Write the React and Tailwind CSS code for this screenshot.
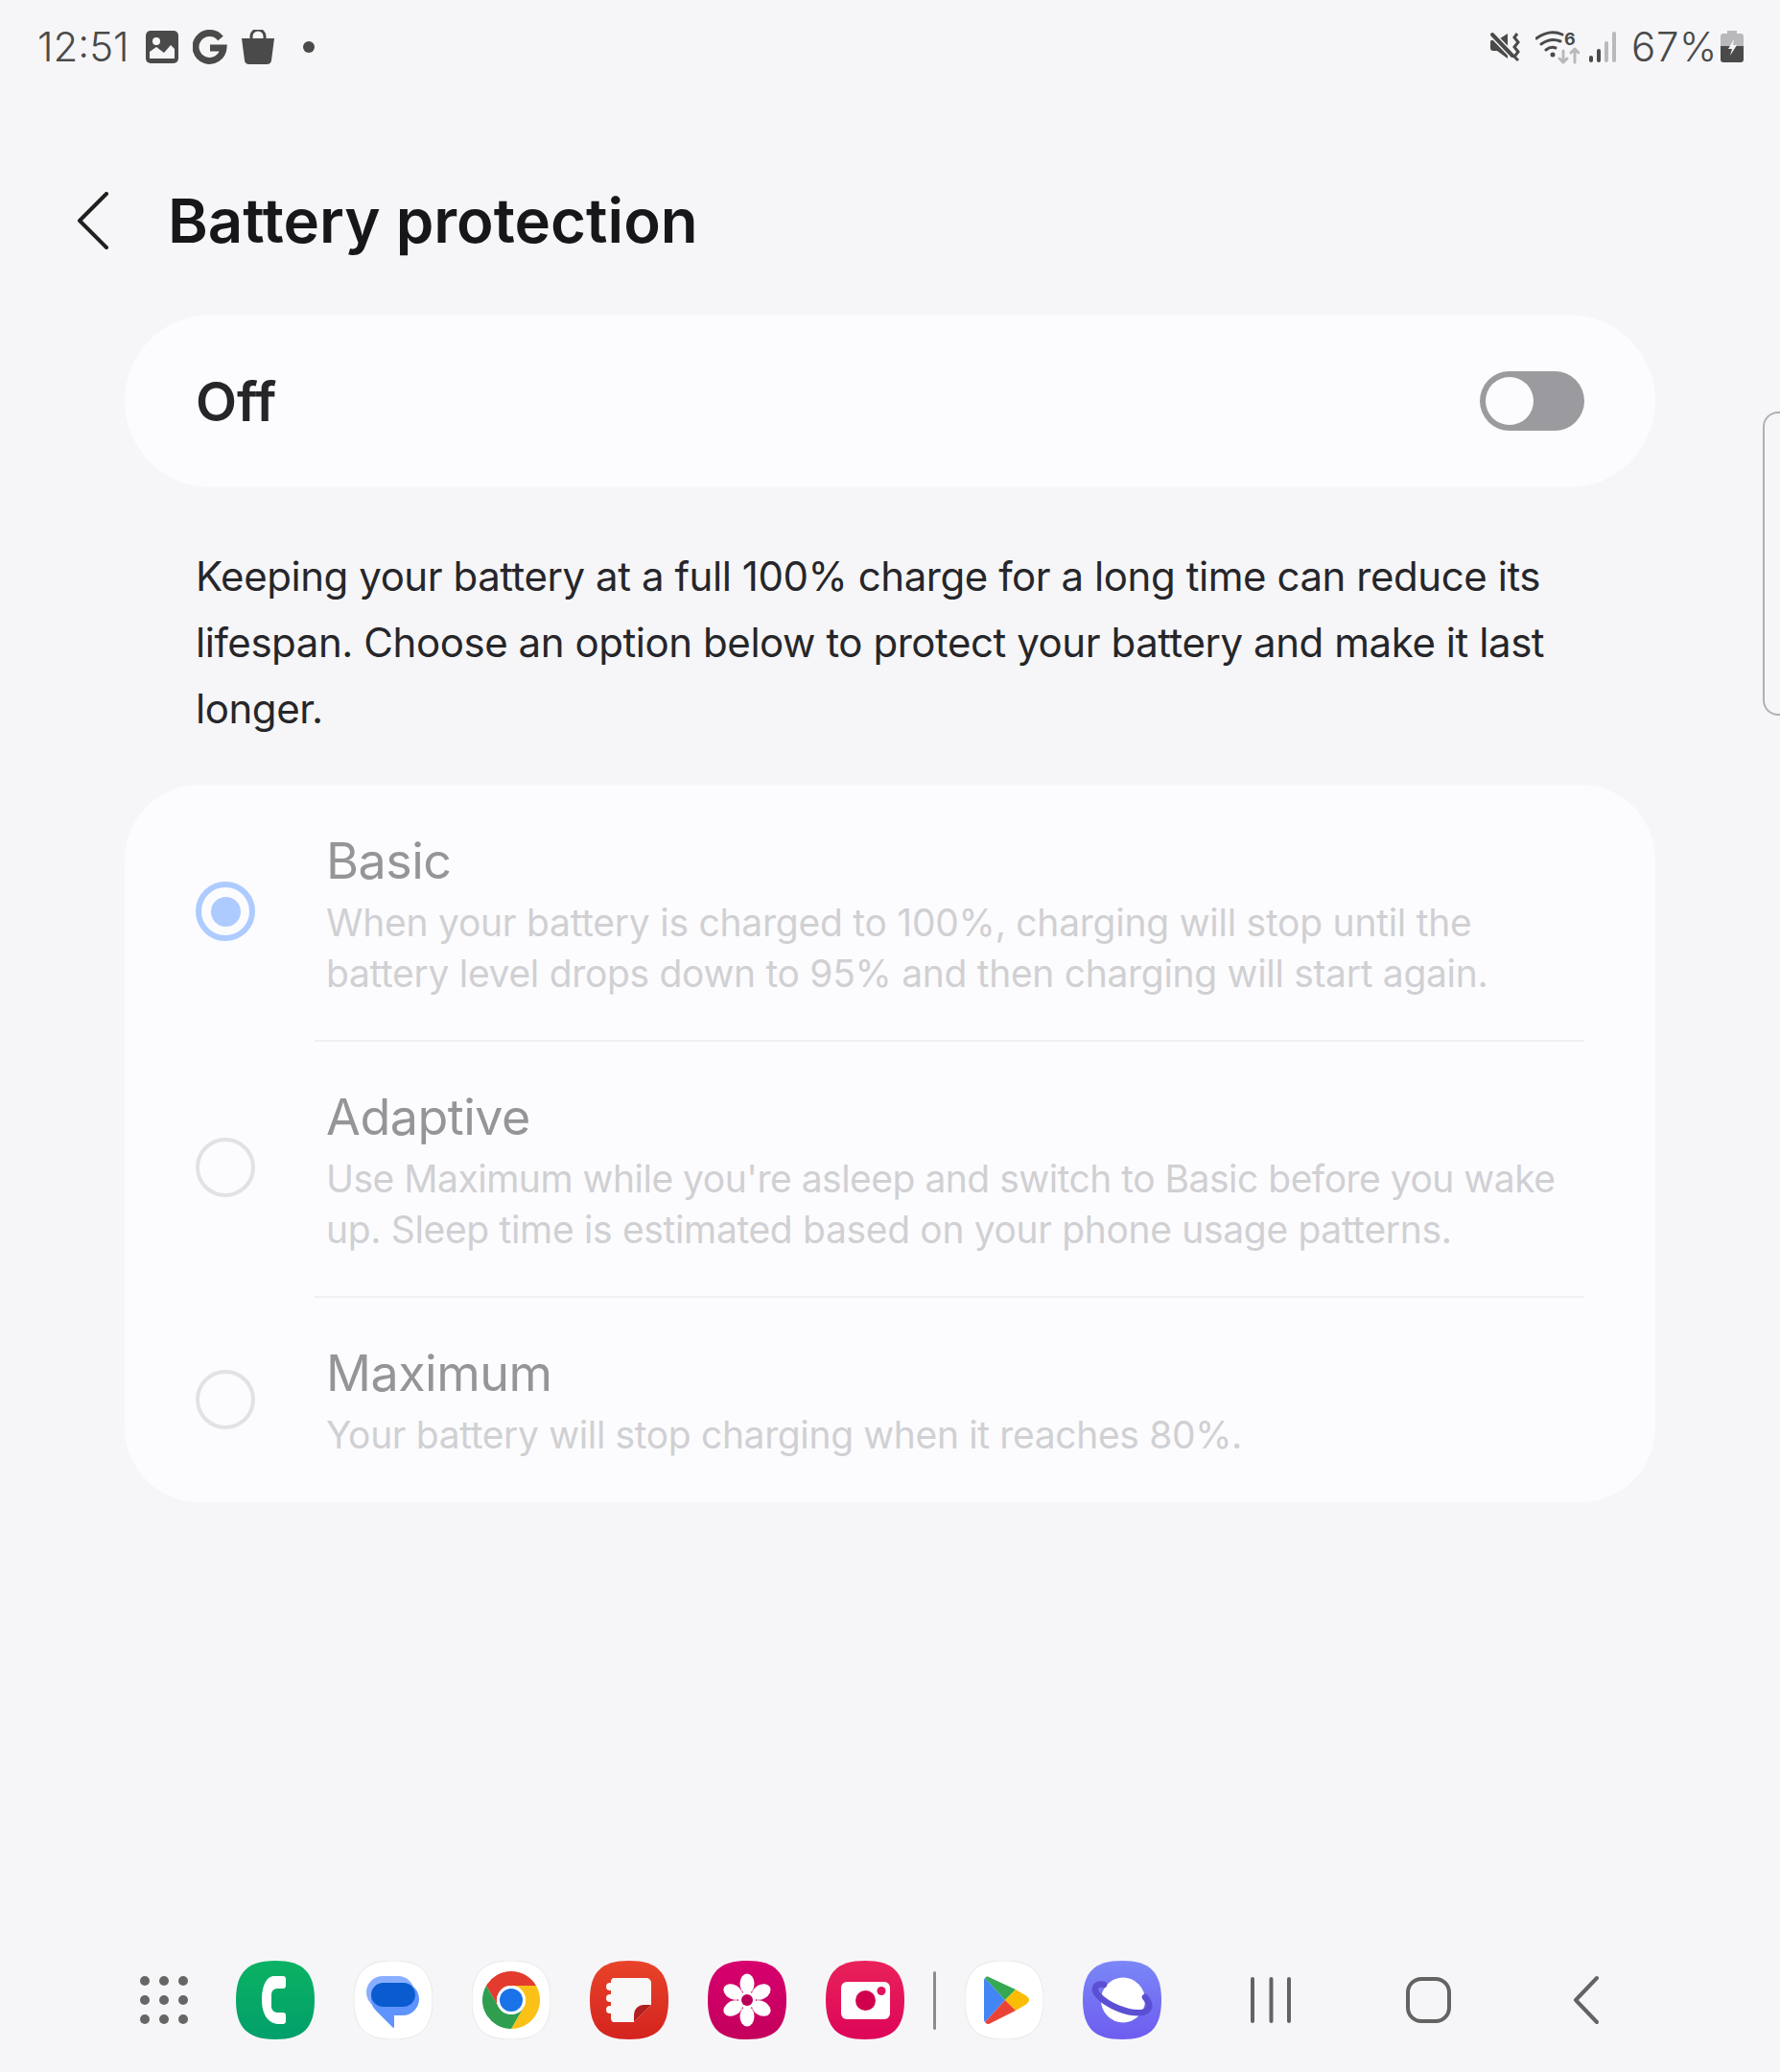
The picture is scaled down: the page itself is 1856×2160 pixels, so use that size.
import React from 'react';

const font = { fontFamily: 'Inter, "Liberation Sans", sans-serif' };
const SQUIRCLE = 'M41 0C70 0 82 12 82 41C82 70 70 82 41 82C12 82 0 70 0 41C0 12 12 0 41 0Z';

const AppIcon = ({ id, from, to, children, outline }) => (
    <svg width="82" height="82" viewBox="0 0 82 82" className="shrink-0">
        {from && (
            <defs>
                <linearGradient id={id} x1="0" y1="0" x2="0" y2="1">
                    <stop offset="0" stopColor={from} />
                    <stop offset="1" stopColor={to} />
                </linearGradient>
            </defs>
        )}
        <path
            d={SQUIRCLE}
            fill={from ? `url(#${id})` : '#ffffff'}
            stroke={outline ? '#e8e8ea' : 'none'}
            strokeWidth={outline ? 1 : 0}
        />
        {children}
    </svg>
);

const PhoneIcon = () => (
    <AppIcon id="phone" from="#0bb263" to="#029f6b">
        <path fill="#fff" d="M40 16H49a3 3 0 0 1 3 3V26a3 3 0 0 1-3 3H43a6 6 0 0 0-6 6V48a6 6 0 0 0 6 6h6a3 3 0 0 1 3 3v6a3 3 0 0 1-3 3H45C34 66 27 56 27 41C27 26 32 16 40 16Z" />
    </AppIcon>
);

const MessagesIcon = () => (
    <AppIcon outline>
        <rect x="13" y="16" width="50" height="34" rx="17" fill="#8aaeff" />
        <path fill="#5f93ff" d="M35 23H51a17 17 0 0 1 0 34H42V69Q42 71 40 69L23 52Q18 47 18 40A17 17 0 0 1 35 23Z" />
        <rect x="18" y="23" width="46" height="25" rx="12.5" fill="#0a5bd0" />
    </AppIcon>
);

const ChromeIcon = () => (
    <AppIcon outline>
        <path fill="#e33b2e" d="M67 26A30 30 0 0 0 15 26L28 48.5A15 15 0 0 1 41 26Z" />
        <path fill="#fbc116" d="M67 26H41A15 15 0 0 1 54 48.5L41 71A30 30 0 0 0 67 26Z" />
        <path fill="#2f9e4f" d="M15 26A30 30 0 0 0 41 71L54 48.5A15 15 0 0 1 28 48.5Z" />
        <circle cx="41" cy="41" r="15" fill="#fff" />
        <circle cx="41" cy="41" r="12" fill="#1a73e8" />
    </AppIcon>
);

const NotesIcon = () => (
    <AppIcon id="notes" from="#e8442a" to="#d4231f">
        <path fill="#f8f8f8" d="M24 18H59a5 5 0 0 1 5 5V46L46 64H24a4 4 0 0 1-2-4V22a4 4 0 0 1 2-4Z" />
        <circle cx="21" cy="27" r="4" fill="#f8f8f8" />
        <circle cx="21" cy="39" r="4" fill="#f8f8f8" />
        <circle cx="21" cy="51" r="4" fill="#f8f8f8" />
        <path fill="#b21f1f" d="M64 46L46 64V56A10 10 0 0 1 56 46Z" />
    </AppIcon>
);

const FlowerIcon = () => (
    <AppIcon id="flower" from="#d6006e" to="#c4005c">
        {[0, 60, 120, 180, 240, 300].map((angle) => (
            <ellipse key={angle} cx="41" cy="24" rx="7.5" ry="10.5" fill="#fff" transform={`rotate(${angle} 41 41)`} />
        ))}
        <circle cx="41" cy="41" r="9" fill="#fff" />
        <circle cx="41" cy="41" r="6" fill="#b80058" />
    </AppIcon>
);

const CameraIcon = () => (
    <AppIcon id="camera" from="#e9225a" to="#dd0559">
        <rect x="16" y="22" width="51" height="39" rx="6" fill="#fff" />
        <circle cx="41.5" cy="41.5" r="10.5" fill="#d1004f" />
        <circle cx="58" cy="31.5" r="4.5" fill="#e0115f" />
    </AppIcon>
);

const PlayIcon = () => (
    <AppIcon outline>
        <path fill="#4285f4" d="M21 18L42 41L21 64Q20 63 20 61V21Q20 19 21 18Z" />
        <path fill="#34a853" d="M21 18Q23 15.5 26 17.5L53 30L42 41Z" />
        <path fill="#fbbc04" d="M53 30L64 36.5Q67 38.5 67 41Q67 43.5 64 45.5L53 52L42 41Z" />
        <path fill="#ea4335" d="M21 64L42 41L53 52L26 65.5Q23 67 21 64Z" />
    </AppIcon>
);

const InternetIcon = () => (
    <AppIcon id="internet" from="#7b87f7" to="#6d5cf0">
        <ellipse cx="42" cy="41" rx="23" ry="23.5" fill="#fff" />
        <path fill="none" stroke="#5b4fd3" strokeWidth="6.5" strokeLinecap="round" d="M22 25C13 23 10 30 16 36C26 47 48 56 62 54C70 52 72 46 65 38" />
    </AppIcon>
);

const StatusLeft = () => (
    <div className="flex items-center">
        <span className="text-[42px] font-light leading-none text-[#4a4a4a]">12:51</span>
        <svg width="34" height="34" viewBox="0 0 34 34" className="ml-[17px]">
            <rect width="34" height="34" rx="5" fill="#4a4a4a" />
            <circle cx="11" cy="11" r="4" fill="#f6f6f8" />
            <path fill="#f6f6f8" d="M4 29V22L11 17L19 23L26 15L30 19V29Z" />
        </svg>
        <svg width="36" height="36" viewBox="0 0 36 36" className="ml-[15px]">
            <path fill="none" stroke="#4a4a4a" strokeWidth="7" d="M29 9A14.5 14.500 0 1 0 32 19H18" />
        </svg>
        <svg width="36" height="37" viewBox="0 0 36 37" className="ml-[14px]">
            <path fill="none" stroke="#4a4a4a" strokeWidth="3" d="M11 11V7a7 7 0 0 1 14 0V11" />
            <path fill="#4a4a4a" d="M1 9H35L32 32Q31.500 36 27 36H9Q4.500 36 4 32Z" />
        </svg>
        <div className="ml-[29px] h-[12px] w-[12px] rounded-full bg-[#4a4a4a]" />
    </div>
);

const StatusRight = () => (
    <div className="flex items-center">
        <svg width="34" height="32" viewBox="0 0 34 32">
            <path fill="#4a4a4a" d="M2 9H8L19 2V28L8 20H4Q1 20 1 17V11Q1 9 2 9Z" />
            <path stroke="#f6f6f8" strokeWidth="7" d="M0 0L26 27" />
            <path stroke="#4a4a4a" strokeWidth="4" strokeLinecap="round" d="M3 3L24 25" />
            <path fill="none" stroke="#4a4a4a" strokeWidth="3" d="M29 2L26 6L30 11L26 16L30 21L26 26L30 30" />
        </svg>
        <svg width="46" height="42" viewBox="0 -4 46 42" className="ml-[14px]">
            <path fill="none" stroke="#4a4a4a" strokeWidth="3" strokeLinecap="round" d="M1 8Q15 -2 28 4M6 14Q16 7 26 11M11 20Q16 16 21 18" />
            <circle cx="18" cy="25" r="2.500" fill="#4a4a4a" />
            <path fill="none" stroke="#b9b9bb" strokeWidth="3" strokeLinecap="round" strokeLinejoin="round" d="M29 21V33M25 29L29 33L33 29M41 33V19M37 23L41 19L45 23" />
            <text x="30" y="15" fontSize="18" fontWeight="700" fill="#4a4a4a" fontFamily="Inter">6</text>
        </svg>
        <svg width="29" height="32" viewBox="0 0 29 32" className="ml-[10px]">
            <rect x="0" y="25" width="4" height="7" rx="2" fill="#4a4a4a" />
            <rect x="8" y="18" width="4" height="14" rx="2" fill="#4a4a4a" />
            <rect x="16" y="10" width="4" height="22" rx="2" fill="#b9b9bb" />
            <rect x="24" y="0" width="4" height="32" rx="2" fill="#b9b9bb" />
        </svg>
        <span className="ml-[15px] text-[42px] font-light leading-none tracking-[0.6px] text-[#4a4a4a]">67%</span>
        <svg width="24" height="34" viewBox="0 0 24 34" className="ml-[3px]">
            <path fill="#b9b9bb" d="M7 0H17V3H21Q24 3 24 6V16H0V6Q0 3 3 3H7Z" />
            <path fill="#4a4a4a" d="M0 16H24V30Q24 33 21 33H3Q0 33 0 30Z" />
            <path fill="#f6f6f8" d="M14 9L8 19H12L10 26L17 15H13Z" />
        </svg>
    </div>
);

const Radio = ({ checked }) => (
    <div
        className={
            checked
                ? 'ml-[74px] flex h-[62px] w-[62px] shrink-0 items-center justify-center rounded-full border-[6px] border-[#aecbff]'
                : 'ml-[74px] flex h-[62px] w-[62px] shrink-0 items-center justify-center rounded-full border-[4px] border-[#e2e2e4]'
        }
    >
        {checked && <div className="h-[31px] w-[31px] rounded-full bg-[#aecbff]" />}
    </div>
);

const Option = ({ title, lines, checked, last }) => (
    <div className="flex items-center">
        <Radio checked={checked} />
        <div className={last ? 'ml-[74px] pt-[50px] pb-[44px]' : 'ml-[74px] pt-[50px] pb-[41px]'}>
            <div className="mb-[7px] text-[52px] leading-[60px] tracking-[-0.5px] text-[#959597]">{title}</div>
            {lines.map((line) => (
                <div key={line.text} className={`whitespace-nowrap text-[39px] leading-[53px] text-[#d0d0d3] ${line.tracking}`}>{line.text}</div>
            ))}
        </div>
    </div>
);

const Divider = () => <div className="mt-[2px] mb-[-1px] ml-[198px] mr-[74px] h-[2px] bg-[#f0f0f2]" />;

const App = () => {
    return (
        <div className="relative flex h-[2160px] w-[1856px] flex-col overflow-hidden bg-[#f6f6f8]" style={font}>
            {/* Status bar */}
            <div className="flex h-[98px] items-center justify-between pl-[39px] pr-[38px]">
                <StatusLeft />
                <StatusRight />
            </div>

            {/* Header */}
            <div className="flex h-[230px] items-center pt-[34px]">
                <svg width="34" height="60" viewBox="0 0 34 60" className="ml-[80px]">
                    <path fill="none" stroke="#202020" strokeWidth="4" strokeLinecap="round" strokeLinejoin="round" d="M31 2L3 30L31 58" />
                </svg>
                <h1 className="ml-[61px] text-[63.5px] font-semibold leading-none text-[#17171a]">Battery protection</h1>
            </div>

            {/* Master switch */}
            <div className="mx-[130px] flex h-[180px] items-center justify-between rounded-[90px] bg-[#fcfcfe] pl-[74px] pr-[74px]">
                <span className="pt-[2px] text-[56px] font-semibold text-[#26262a]">Off</span>
                <div className="flex h-[62px] w-[109px] items-center rounded-full bg-[#9b9b9f] pl-[6px]">
                    <div className="h-[50px] w-[50px] rounded-full bg-[#fcfcfe]" />
                </div>
            </div>

            <div className="mt-[58px] mb-[45px] ml-[204px] text-[42px] leading-[69px] tracking-[-0.44px] text-[#26262a]">
                <div className="whitespace-nowrap">Keeping your battery at a full 100% charge for a long time can reduce its</div>
                <div className="whitespace-nowrap">lifespan. Choose an option below to protect your battery and make it last</div>
                <div className="whitespace-nowrap">longer.</div>
            </div>

            {/* Options */}
            <div className="mx-[130px] rounded-[78px] bg-[#fcfcfe]">
                <Option
                    checked
                    title="Basic"
                    lines={[
                        { text: 'When your battery is charged to 100%, charging will stop until the', tracking: 'tracking-[-0.25px]' },
                        { text: 'battery level drops down to 95% and then charging will start again.', tracking: 'tracking-[-0.31px]' },
                    ]}
                />
                <Divider />
                <Option
                    title="Adaptive"
                    lines={[
                        { text: "Use Maximum while you're asleep and switch to Basic before you wake", tracking: 'tracking-[-0.5px]' },
                        { text: 'up. Sleep time is estimated based on your phone usage patterns.', tracking: 'tracking-[-0.34px]' },
                    ]}
                />
                <Divider />
                <Option
                    last
                    title="Maximum"
                    lines={[{ text: 'Your battery will stop charging when it reaches 80%.', tracking: 'tracking-[-0.36px]' }]}
                />
            </div>

            {/* Side panel handle */}
            <div className="absolute right-0 top-[429px] h-[317px] w-[18px] rounded-l-[16px] border-y-2 border-l-2 border-[#b0b0b0]" />

            {/* Dock */}
            <div className="mt-auto mb-[34px] flex h-[82px] items-center pl-[146px]">
                <div className="grid grid-cols-3 gap-[10px]">
                    {[1, 2, 3, 4, 5, 6, 7, 8, 9].map((n) => (
                        <div key={n} className="h-[10px] w-[10px] rounded-full bg-[#666666]" />
                    ))}
                </div>
                <div className="ml-[50px] flex items-center gap-[41px]">
                    <PhoneIcon />
                    <MessagesIcon />
                    <ChromeIcon />
                    <NotesIcon />
                    <FlowerIcon />
                    <CameraIcon />
                </div>
                <div className="ml-[30px] h-[61px] w-[3px] rounded-full bg-[#8c8c8e]" />
                <div className="ml-[30px]"><PlayIcon /></div>
                <div className="ml-[41px]"><InternetIcon /></div>
                <svg width="46" height="50" viewBox="0 0 46 50" className="ml-[92px]">
                    <path stroke="#636363" strokeWidth="4" strokeLinecap="round" d="M3 3V47M22.500 3V47M41 3V47" />
                </svg>
                <svg width="47" height="48" viewBox="0 0 47 48" className="ml-[117px]">
                    <rect x="2" y="2" width="43" height="44" rx="14" fill="none" stroke="#636363" strokeWidth="4" />
                </svg>
                <svg width="27" height="52" viewBox="0 0 27 52" className="ml-[127px]">
                    <path fill="none" stroke="#636363" strokeWidth="4" strokeLinecap="round" strokeLinejoin="round" d="M25 3L3 26L25 49" />
                </svg>
            </div>
        </div>
    );
};

export default App;
